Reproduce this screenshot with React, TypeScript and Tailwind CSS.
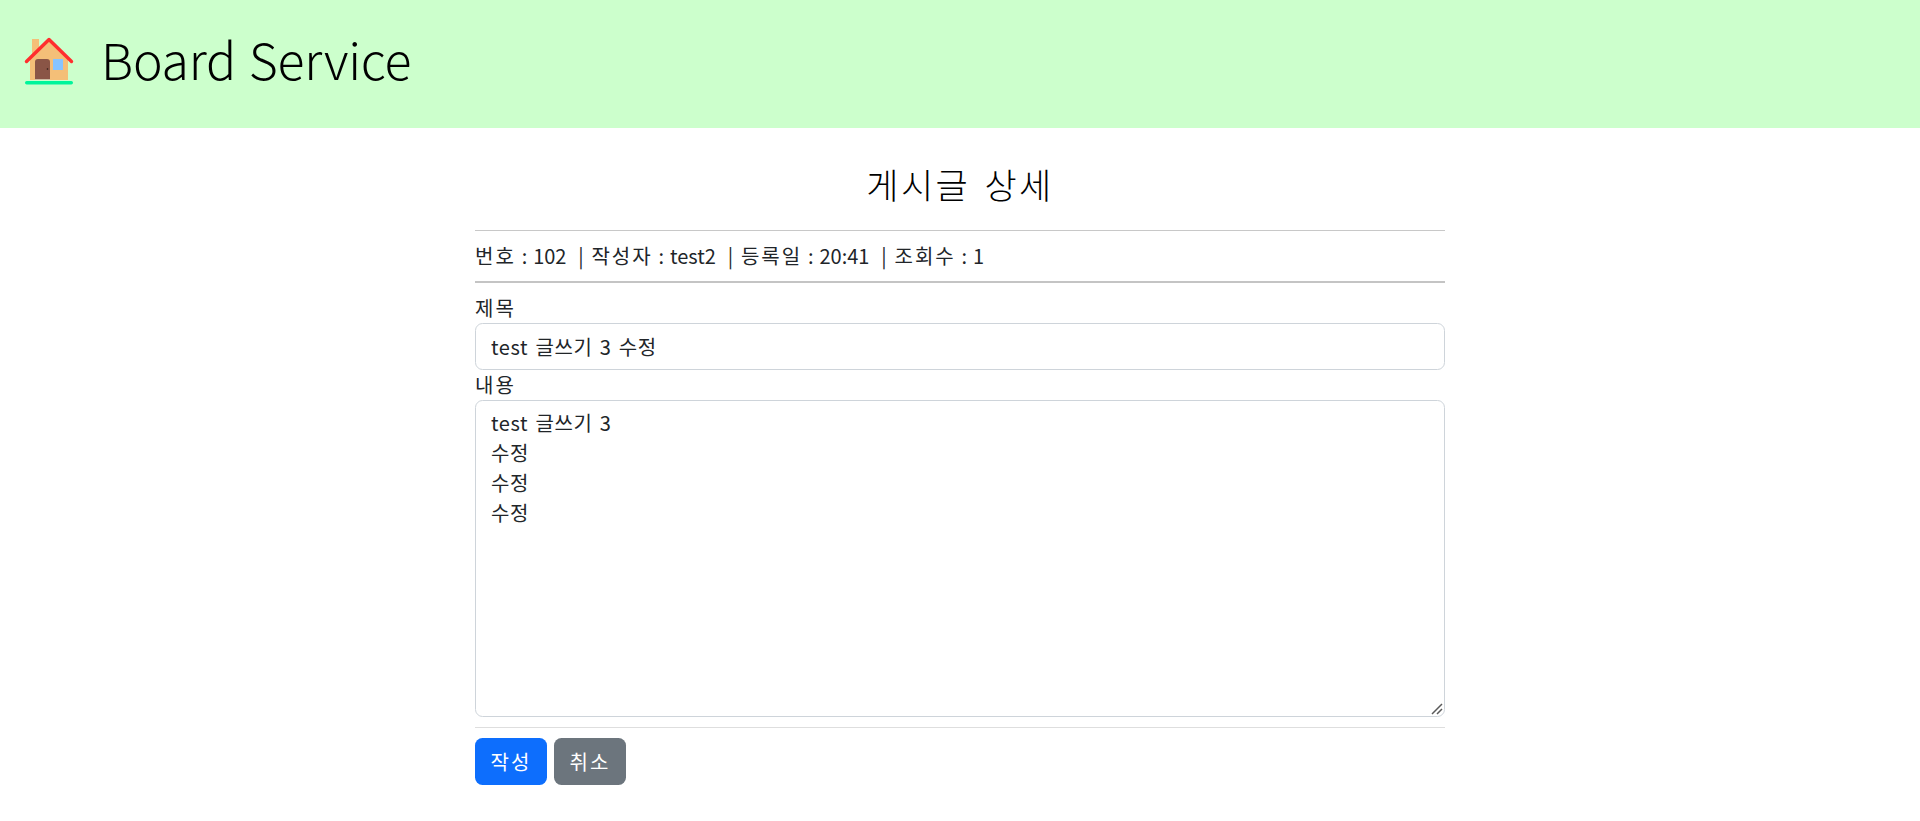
const FONT = "font-['Noto_Sans_CJK_KR','Noto_Sans',sans-serif]";

function HouseIcon() {
  return (
    <svg viewBox="0 0 50 50" className="w-[50px] h-[50px] shrink-0 mb-[6px]">
      <rect x="8" y="3" width="7" height="16" fill="#f4bf78" />
      <path d="M6 22 L25 4 L44 22 V44 H6 Z" fill="#f4bf78" />
      <path d="M11 44 V26 Q11 23 14 23 H23 Q26 23 26 26 V44 Z" fill="#8a5546" />
      <rect x="11" y="43" width="15" height="1" fill="#c9b9a0" />
      <circle cx="23.5" cy="33" r="0.8" fill="#2b1a14" />
      <rect x="29" y="23" width="10" height="11" fill="#87c4ff" />
      <path d="M2.5 25.5 L25 3.5 L47.5 25.5" fill="none" stroke="#ff2e2e" strokeWidth="3.4" strokeLinecap="round" strokeLinejoin="round" />
      <rect x="1" y="45" width="48" height="3.5" rx="1.7" fill="#00f59b" />
    </svg>
  );
}

function Ko({ children }: { children: string }) {
  return <span className="tracking-[0.1em]">{children}</span>;
}

function ResizeGrip() {
  return (
    <svg viewBox="0 0 12 12" className="absolute right-[2px] bottom-[2px] w-[12px] h-[12px] pointer-events-none">
      <path d="M1 11 L11 1 M6 11 L11 6" stroke="#5a5a5a" strokeWidth="1.5" />
    </svg>
  );
}

export default function App() {
  return (
    <div className={`${FONT} min-h-[821px] bg-white text-[20px] leading-[30px] text-[#212529]`}>
      <header className="flex h-[128px] items-center bg-[#ccffcc] pl-[24px] gap-[27px]">
        <HouseIcon />
        <span className="mb-[12px] text-[50px] leading-[60px] font-light text-black tracking-[-0.2px] [word-spacing:2px]">Board Service</span>
      </header>

      <main className="mx-auto w-[970px] pb-[36px]">
        <h3 className="pt-[30px] text-center text-[35px] leading-[52px] font-light text-black tracking-[0.07em] [word-spacing:4px]">게시글 상세</h3>
        <hr className="mt-[20px] border-t-[1px] border-[#c8c8c8]" />
        <div className="flex h-[50px] items-center whitespace-pre [word-spacing:1.4px]">
          <Ko>번호</Ko> : 102  |<Ko> 작성자</Ko> : test2  |<Ko> 등록일</Ko> : 20:41  |<Ko> 조회수</Ko> : 1
        </div>
        <hr className="border-t-[2px] border-[#c4c4c4]" />

        <label className="mt-[10px] block tracking-[0.1em]">제목</label>
        <input
          defaultValue="test 글쓰기 3 수정"
          className="block h-[47px] w-full rounded-[7.5px] border border-[#ced4da] px-[15px] tracking-[0.03em] [word-spacing:2.2px]"
        />
        <label className="block tracking-[0.1em]">내용</label>
        <div className="relative">
          <textarea
            defaultValue={"test 글쓰기 3\n수정\n수정\n수정"}
            className="block h-[317px] w-full resize-none rounded-[7.5px] border border-[#ced4da] px-[15px] py-[7px] tracking-[0.03em] [word-spacing:2.2px]"
          />
          <ResizeGrip />
        </div>
        <hr className="mt-[10px] border-t-[1px] border-[#dedede]" />

        <div className="mt-[10px] flex gap-[7px]">
          <button className="h-[47px] w-[72px] rounded-[7.5px] bg-[#0d6efd] text-white tracking-[0.1em]">작성</button>
          <button className="h-[47px] w-[72px] rounded-[7.5px] bg-[#6c757d] text-white tracking-[0.1em]">취소</button>
        </div>
      </main>
    </div>
  );
}
